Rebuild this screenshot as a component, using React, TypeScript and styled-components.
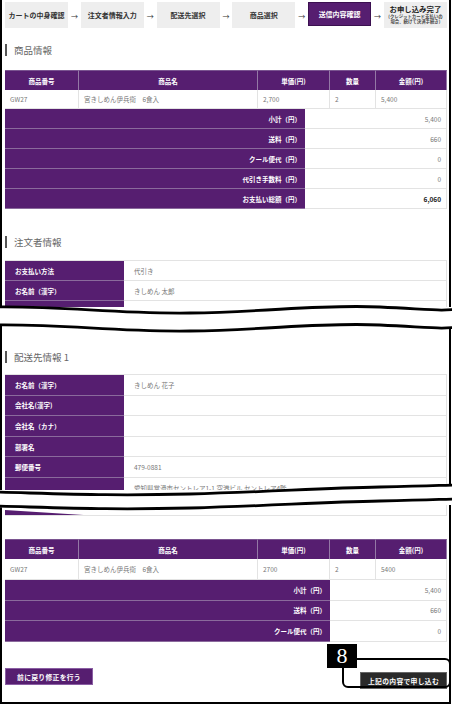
import React from 'react';
import styled, { createGlobalStyle } from 'styled-components';

const PURPLE = '#561e70';

const GlobalStyle = createGlobalStyle`
  html, body {
    margin: 0;
    padding: 0;
    background: #fff;
  }
  body {
    font-family: 'Noto Sans CJK JP', 'Noto Sans', sans-serif;
    color: #333;
  }
  * {
    box-sizing: border-box;
  }
`;

const Page = styled.div`
  width: 452px;
  height: 705px;
  overflow: hidden;
  background: #fff;
`;

const Panel = styled.div<{ $height: number; $pad?: number; $last?: boolean }>`
  width: 451px;
  height: ${(p) => p.$height}px;
  padding: ${(p) => p.$pad || 0}px 2px 0 3px;
  border-left: 2px solid #000;
  border-right: 2px solid #000;
  border-bottom: ${(p) => (p.$last ? '2px solid #000' : '0')};
  overflow: ${(p) => (p.$last ? 'visible' : 'hidden')};
`;

/* step bar */
const StepBar = styled.div`
  display: flex;
  align-items: flex-start;
  justify-content: space-between;
  margin-top: 2px;
  height: 26px;
`;

const Step = styled.div<{ $active?: boolean }>`
  width: 63px;
  height: ${(p) => (p.$active ? 24 : 26)}px;
  display: flex;
  flex-direction: column;
  align-items: center;
  justify-content: center;
  background: ${(p) => (p.$active ? PURPLE : '#eeeeee')};
  border: ${(p) => (p.$active ? '1px solid #3b1050' : '0')};
  color: ${(p) => (p.$active ? '#fff' : '#333')};
  font-size: 7px;
  font-weight: 700;
  line-height: 1.2;
  white-space: nowrap;
`;

const StepArrow = styled.span`
  align-self: center;
  margin-top: 2px;
  font-size: 7px;
  color: #333;
`;

const StepTitle = styled.span`
  font-size: 7.4px;
  font-weight: 700;
  color: #222;
`;

const StepNote = styled.span`
  font-size: 4.4px;
  font-weight: 700;
  color: #444;
  line-height: 1.35;
`;

const SectionTitle = styled.h2<{ $top: number }>`
  margin: ${(p) => p.$top}px 0 0;
  height: 12px;
  line-height: 12px;
  padding-left: 7px;
  border-left: 2px solid #555;
  font-size: 9.5px;
  font-weight: 400;
  color: #666;
`;

/* product table */
const Grid = styled.div<{ $cols: string; $top?: number }>`
  display: grid;
  grid-template-columns: ${(p) => p.$cols};
  margin-top: ${(p) => p.$top || 0}px;
`;

const HeadCell = styled.div`
  height: 20px;
  display: flex;
  align-items: center;
  justify-content: center;
  background: ${PURPLE};
  border-right: 1px solid #9478a6;
  border-top: 1px solid #7a5490;
  color: #fff;
  font-size: 6.5px;
  font-weight: 700;
  &:last-child {
    border-right: 1px solid #7a5490;
  }
`;

const Cell = styled.div<{ $h: number }>`
  height: ${(p) => p.$h}px;
  display: flex;
  align-items: center;
  padding-left: 5px;
  border-right: 1px solid #e3e3e3;
  border-bottom: 1px solid #e3e3e3;
  font-size: 6.5px;
  color: #777;
  &:first-child {
    border-left: 1px solid #e3e3e3;
  }
`;

const SumLabel = styled.div<{ $h: number }>`
  height: ${(p) => p.$h}px;
  display: flex;
  align-items: center;
  justify-content: flex-end;
  padding-right: 4px;
  background: ${PURPLE};
  border-bottom: 1px solid #8a6a9c;
  color: #fff;
  font-size: 6.5px;
  font-weight: 700;
`;

const SumValue = styled.div<{ $h: number; $strong?: boolean }>`
  height: ${(p) => p.$h}px;
  display: flex;
  align-items: center;
  justify-content: flex-end;
  padding-right: 5px;
  border-right: 1px solid #e3e3e3;
  border-bottom: 1px solid #e3e3e3;
  font-size: 6.5px;
  font-weight: ${(p) => (p.$strong ? 700 : 400)};
  color: ${(p) => (p.$strong ? '#222' : '#777')};
`;

/* label / value table */
const InfoGrid = styled.div<{ $top?: number }>`
  display: grid;
  grid-template-columns: 119px 1fr;
  margin-top: ${(p) => p.$top || 0}px;
  border-top: 1px solid #e3e3e3;
`;

const InfoLabel = styled.div<{ $h: number }>`
  height: ${(p) => p.$h}px;
  display: flex;
  align-items: center;
  padding-left: 10px;
  background: ${PURPLE};
  border-bottom: 1px solid #8a6a9c;
  color: #fff;
  font-size: 6.5px;
  font-weight: 700;
`;

const InfoValue = styled.div<{ $h: number }>`
  height: ${(p) => p.$h}px;
  display: flex;
  align-items: center;
  padding-left: 10px;
  border-right: 1px solid #e3e3e3;
  border-bottom: 1px solid #e3e3e3;
  font-size: 6.5px;
  color: #777;
  white-space: nowrap;
`;

/* bottom edge of a row torn off by the page break */
const CutRow = styled.div`
  display: grid;
  grid-template-columns: 119px 1fr;
  height: 11px;
  border-bottom: 1px solid #e3e3e3;
  border-right: 1px solid #e3e3e3;

  &::before {
    content: '';
    background: ${PURPLE};
    clip-path: polygon(0 50%, 66% 100%, 0 100%);
  }
`;

/* torn page break */
const BreakSvg = styled.svg<{ $above: number; $below: number }>`
  display: block;
  position: relative;
  z-index: 2;
  width: 452px;
  height: 40px;
  margin: -${(p) => p.$above}px 0 -${(p) => p.$below}px;
`;

/* buttons */
const ButtonRow = styled.div`
  display: flex;
  justify-content: space-between;
  align-items: center;
  margin-top: 23px;
`;

const Button = styled.button<{ $dark?: boolean }>`
  width: ${(p) => (p.$dark ? 87 : 88)}px;
  height: 17px;
  padding: 0;
  background: ${(p) => (p.$dark ? '#2a2a2a' : PURPLE)};
  border: 1px solid ${(p) => (p.$dark ? '#666' : '#8a5ea3')};
  color: #fff;
  font-family: inherit;
  font-size: 6.8px;
  font-weight: 700;
  letter-spacing: 0.3px;
`;

const Callout = styled.div`
  position: relative;
`;

const Ring = styled.div`
  position: absolute;
  left: -18px;
  top: -7px;
  width: 109px;
  height: 30px;
  border: 2px solid #000;
  border-radius: 6px;
  pointer-events: none;
`;

const Badge = styled.div`
  position: absolute;
  left: -33px;
  top: -21px;
  width: 30px;
  height: 24px;
  display: flex;
  align-items: center;
  justify-content: center;
  background: #000;
  color: #fff;
  font-family: 'Liberation Serif', 'DejaVu Serif', serif;
  font-size: 22px;
  line-height: 1;
`;

type Offsets = [number, number, number, number, number, number, number, number];

const wavePath = (y: number, o: Offsets) =>
  `M-6,${y + o[0]} C70,${y + o[1]} 110,${y + o[2]} 190,${y + o[3]} S320,${y + o[4]} 380,${y + o[5]} S440,${y + o[6]} 458,${y + o[7]}`;

const PageBreak: React.FC<{ top: number; gap: number; below: number; shape: Offsets }> = ({
  top,
  gap,
  below,
  shape,
}) => (
  <BreakSvg $above={top} $below={below} viewBox="0 0 452 40">
    <path d={wavePath(top + gap / 2, shape)} fill="none" stroke="#fff" strokeWidth={gap + 2} />
    <path d={wavePath(top, shape)} fill="none" stroke="#000" strokeWidth={2.8} />
    <path d={wavePath(top + gap, shape)} fill="none" stroke="#000" strokeWidth={2.8} />
  </BreakSvg>
);

const PRODUCT_COLS = '74px 179px 72px 46px 1fr';

const steps = ['カートの中身確認', '注文者情報入力', '配送先選択', '商品選択', '送信内容確認'];

type Sum = { label: string; value: string; strong?: boolean };

const ProductTable: React.FC<{
  price: string;
  amount: string;
  labelWidth: number;
  rowH: number;
  dataH: number;
  sums: Sum[];
  top: number;
}> = ({ price, amount, labelWidth, rowH, dataH, sums, top }) => (
  <>
    <Grid $cols={PRODUCT_COLS} $top={top}>
      {['商品番号', '商品名', '単価(円)', '数量', '金額(円)'].map((h) => (
        <HeadCell key={h}>{h}</HeadCell>
      ))}
      <Cell $h={dataH}>GW27</Cell>
      <Cell $h={dataH}>宮きしめん伊兵衛　6食入</Cell>
      <Cell $h={dataH}>{price}</Cell>
      <Cell $h={dataH}>2</Cell>
      <Cell $h={dataH}>{amount}</Cell>
    </Grid>
    <Grid $cols={`${labelWidth}px 1fr`}>
      {sums.map((s) => (
        <React.Fragment key={s.label}>
          <SumLabel $h={rowH}>{s.label}</SumLabel>
          <SumValue $h={rowH} $strong={s.strong}>
            {s.value}
          </SumValue>
        </React.Fragment>
      ))}
    </Grid>
  </>
);

const InfoTable: React.FC<{ rows: [string, string][]; rowH: number; top: number }> = ({ rows, rowH, top }) => (
  <InfoGrid $top={top}>
    {rows.map(([label, value], i) => (
      <React.Fragment key={i}>
        <InfoLabel $h={rowH}>{label}</InfoLabel>
        <InfoValue $h={rowH}>{value}</InfoValue>
      </React.Fragment>
    ))}
  </InfoGrid>
);

const App: React.FC = () => {
  return (
    <Page>
      <GlobalStyle />
      <Panel $height={307}>
        <StepBar>
          {steps.map((s, i) => (
            <React.Fragment key={s}>
              <Step $active={i === 4}>{s}</Step>
              <StepArrow>→</StepArrow>
            </React.Fragment>
          ))}
          <Step>
            <StepTitle>お申し込み完了</StepTitle>
            <StepNote>(クレジットカード支払いの</StepNote>
            <StepNote>場合、続けて決済手続き)</StepNote>
          </Step>
        </StepBar>

        <SectionTitle $top={16}>商品情報</SectionTitle>
        <ProductTable
          top={14}
          price="2,700"
          amount="5,400"
          labelWidth={300}
          rowH={20}
          dataH={19}
          sums={[
            { label: '小計（円）', value: '5,400' },
            { label: '送料（円）', value: '660' },
            { label: 'クール便代（円）', value: '0' },
            { label: '代引き手数料（円）', value: '0' },
            { label: 'お支払い総額（円）', value: '6,060', strong: true },
          ]}
        />

        <SectionTitle $top={27}>注文者情報</SectionTitle>
        <InfoTable
          top={12}
          rowH={20}
          rows={[
            ['お支払い方法', '代引き'],
            ['お名前（漢字）', 'きしめん 太郎'],
            ['', ''],
          ]}
        />
      </Panel>

      <PageBreak top={10} gap={18} below={11} shape={[0, -1, 7, 6, -3, 0, 4, 2]} />

      <Panel $height={164} $pad={25}>
        <SectionTitle $top={0}>配送先情報 1</SectionTitle>
        <InfoTable
          top={11}
          rowH={20.6}
          rows={[
            ['お名前（漢字）', 'きしめん 花子'],
            ['会社名(漢字)', ''],
            ['会社名（カナ）', ''],
            ['部署名', ''],
            ['郵便番号', '479-0881'],
            ['', '愛知県常滑市セントレア1-1 空港ビル セントレア4階'],
          ]}
        />
      </Panel>

      <PageBreak top={12} gap={14} below={13} shape={[2, 4, 6, 4, -2, -3, -5, -5]} />

      <Panel $height={199} $last>
        <CutRow />
        <ProductTable
          top={23}
          price="2700"
          amount="5400"
          labelWidth={325}
          rowH={20.5}
          dataH={21}
          sums={[
            { label: '小計（円）', value: '5,400' },
            { label: '送料（円）', value: '660' },
            { label: 'クール便代（円）', value: '0' },
          ]}
        />
        <ButtonRow>
          <Button type="button">前に戻り修正を行う</Button>
          <Callout>
            <Button type="button" $dark>
              上記の内容で申し込む
            </Button>
            <Ring />
            <Badge>8</Badge>
          </Callout>
        </ButtonRow>
      </Panel>
    </Page>
  );
};

export default App;
